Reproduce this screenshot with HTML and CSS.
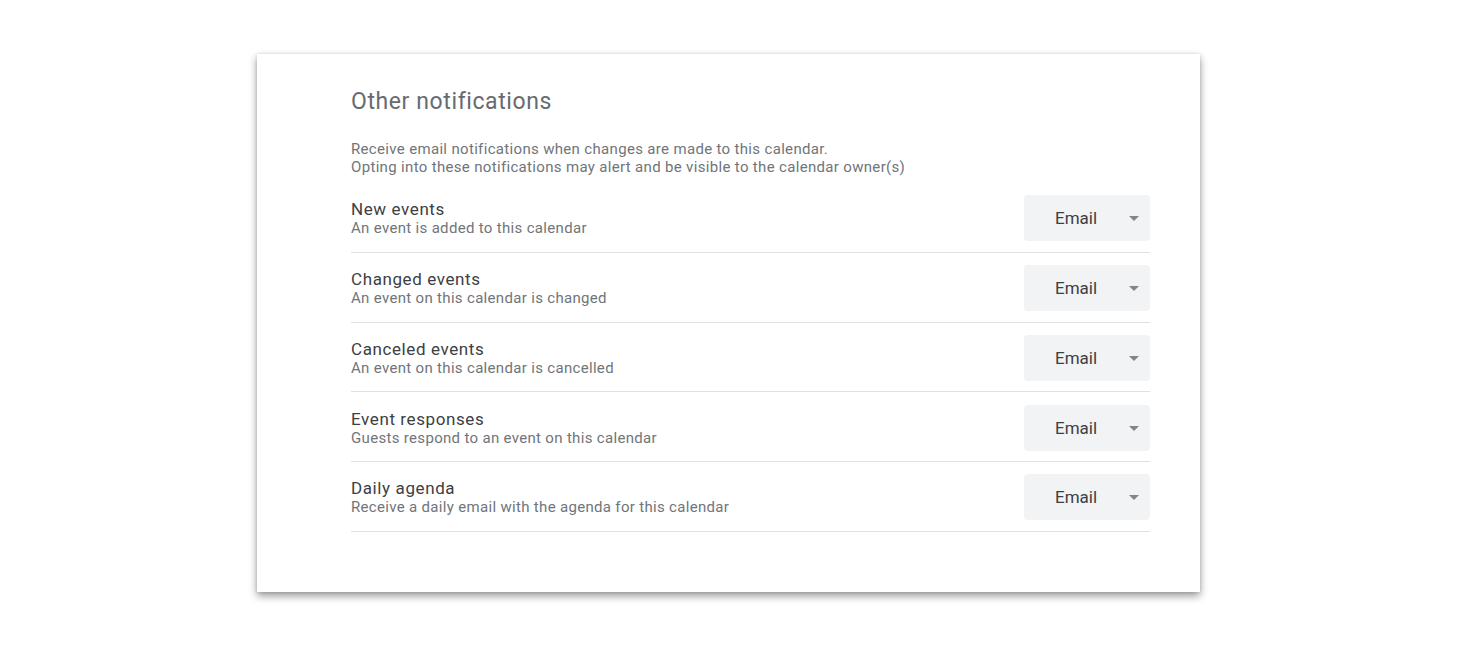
FILE: index.html
```html
<!DOCTYPE html>
<html>
<head>
<meta charset="utf-8">
<link rel="stylesheet" href="styles.css">
</head>
<body>
<div class="card">
  <h2 class="title">Other notifications</h2>
  <p class="desc">Receive email notifications when changes are made to this calendar.<br>Opting into these notifications may alert and be visible to the calendar owner(s)</p>
  <div class="list">
    <div class="row">
      <div class="text"><div class="name">New events</div><div class="sub">An event is added to this calendar</div></div>
      <div class="select"><span class="val">Email</span><span class="arrow"></span></div>
    </div>
    <div class="row">
      <div class="text"><div class="name">Changed events</div><div class="sub">An event on this calendar is changed</div></div>
      <div class="select"><span class="val">Email</span><span class="arrow"></span></div>
    </div>
    <div class="row">
      <div class="text"><div class="name">Canceled events</div><div class="sub">An event on this calendar is cancelled</div></div>
      <div class="select"><span class="val">Email</span><span class="arrow"></span></div>
    </div>
    <div class="row">
      <div class="text"><div class="name">Event responses</div><div class="sub">Guests respond to an event on this calendar</div></div>
      <div class="select"><span class="val">Email</span><span class="arrow"></span></div>
    </div>
    <div class="row">
      <div class="text"><div class="name">Daily agenda</div><div class="sub">Receive a daily email with the agenda for this calendar</div></div>
      <div class="select"><span class="val">Email</span><span class="arrow"></span></div>
    </div>
  </div>
</div>
</body>
</html>
```

FILE: styles.css
```css
html, body { margin: 0; background: #fff; }
body {
  box-sizing: border-box;
  min-height: 654px;
  padding: 54px 0 62px 257px;
  font-family: Roboto, "Noto Sans", Arial, sans-serif;
  color: #3c4043;
}
.card {
  box-sizing: border-box;
  width: 943px;
  height: 538px;
  padding: 34px 50px 60px 94px;
  background: #fff;
  box-shadow: 0 4px 8px rgba(0,0,0,0.4), 0 0 3px rgba(0,0,0,0.12);
}
.title {
  margin: 0;
  font-size: 23px;
  line-height: 28px;
  letter-spacing: 0.6px;
  font-weight: 400;
  color: #676b70;
}
.desc {
  margin: 24px 0 7px;
  font-size: 15px;
  line-height: 18px;
  letter-spacing: 0.33px;
  color: #70757a;
}
.row {
  display: flex;
  align-items: center;
  justify-content: space-between;
  padding: 12.375px 0 10.375px;
  border-bottom: 1px solid #e0e0e0;
}
.name { font-size: 17px; line-height: 20px; letter-spacing: 0.6px; color: #3c4043; }
.sub { font-size: 15px; line-height: 18px; letter-spacing: 0.32px; color: #70757a; }
.select {
  box-sizing: border-box;
  width: 126px;
  height: 46px;
  background: #f1f3f4;
  border-radius: 4px;
  display: flex;
  align-items: center;
  padding-left: 31px;
  position: relative;
}
.val { font-size: 17px; color: #3c4043; }
.arrow {
  position: absolute;
  right: 11px;
  top: 21px;
  width: 0; height: 0;
  border-left: 5px solid transparent;
  border-right: 5px solid transparent;
  border-top: 5px solid #80868b;
}
```
